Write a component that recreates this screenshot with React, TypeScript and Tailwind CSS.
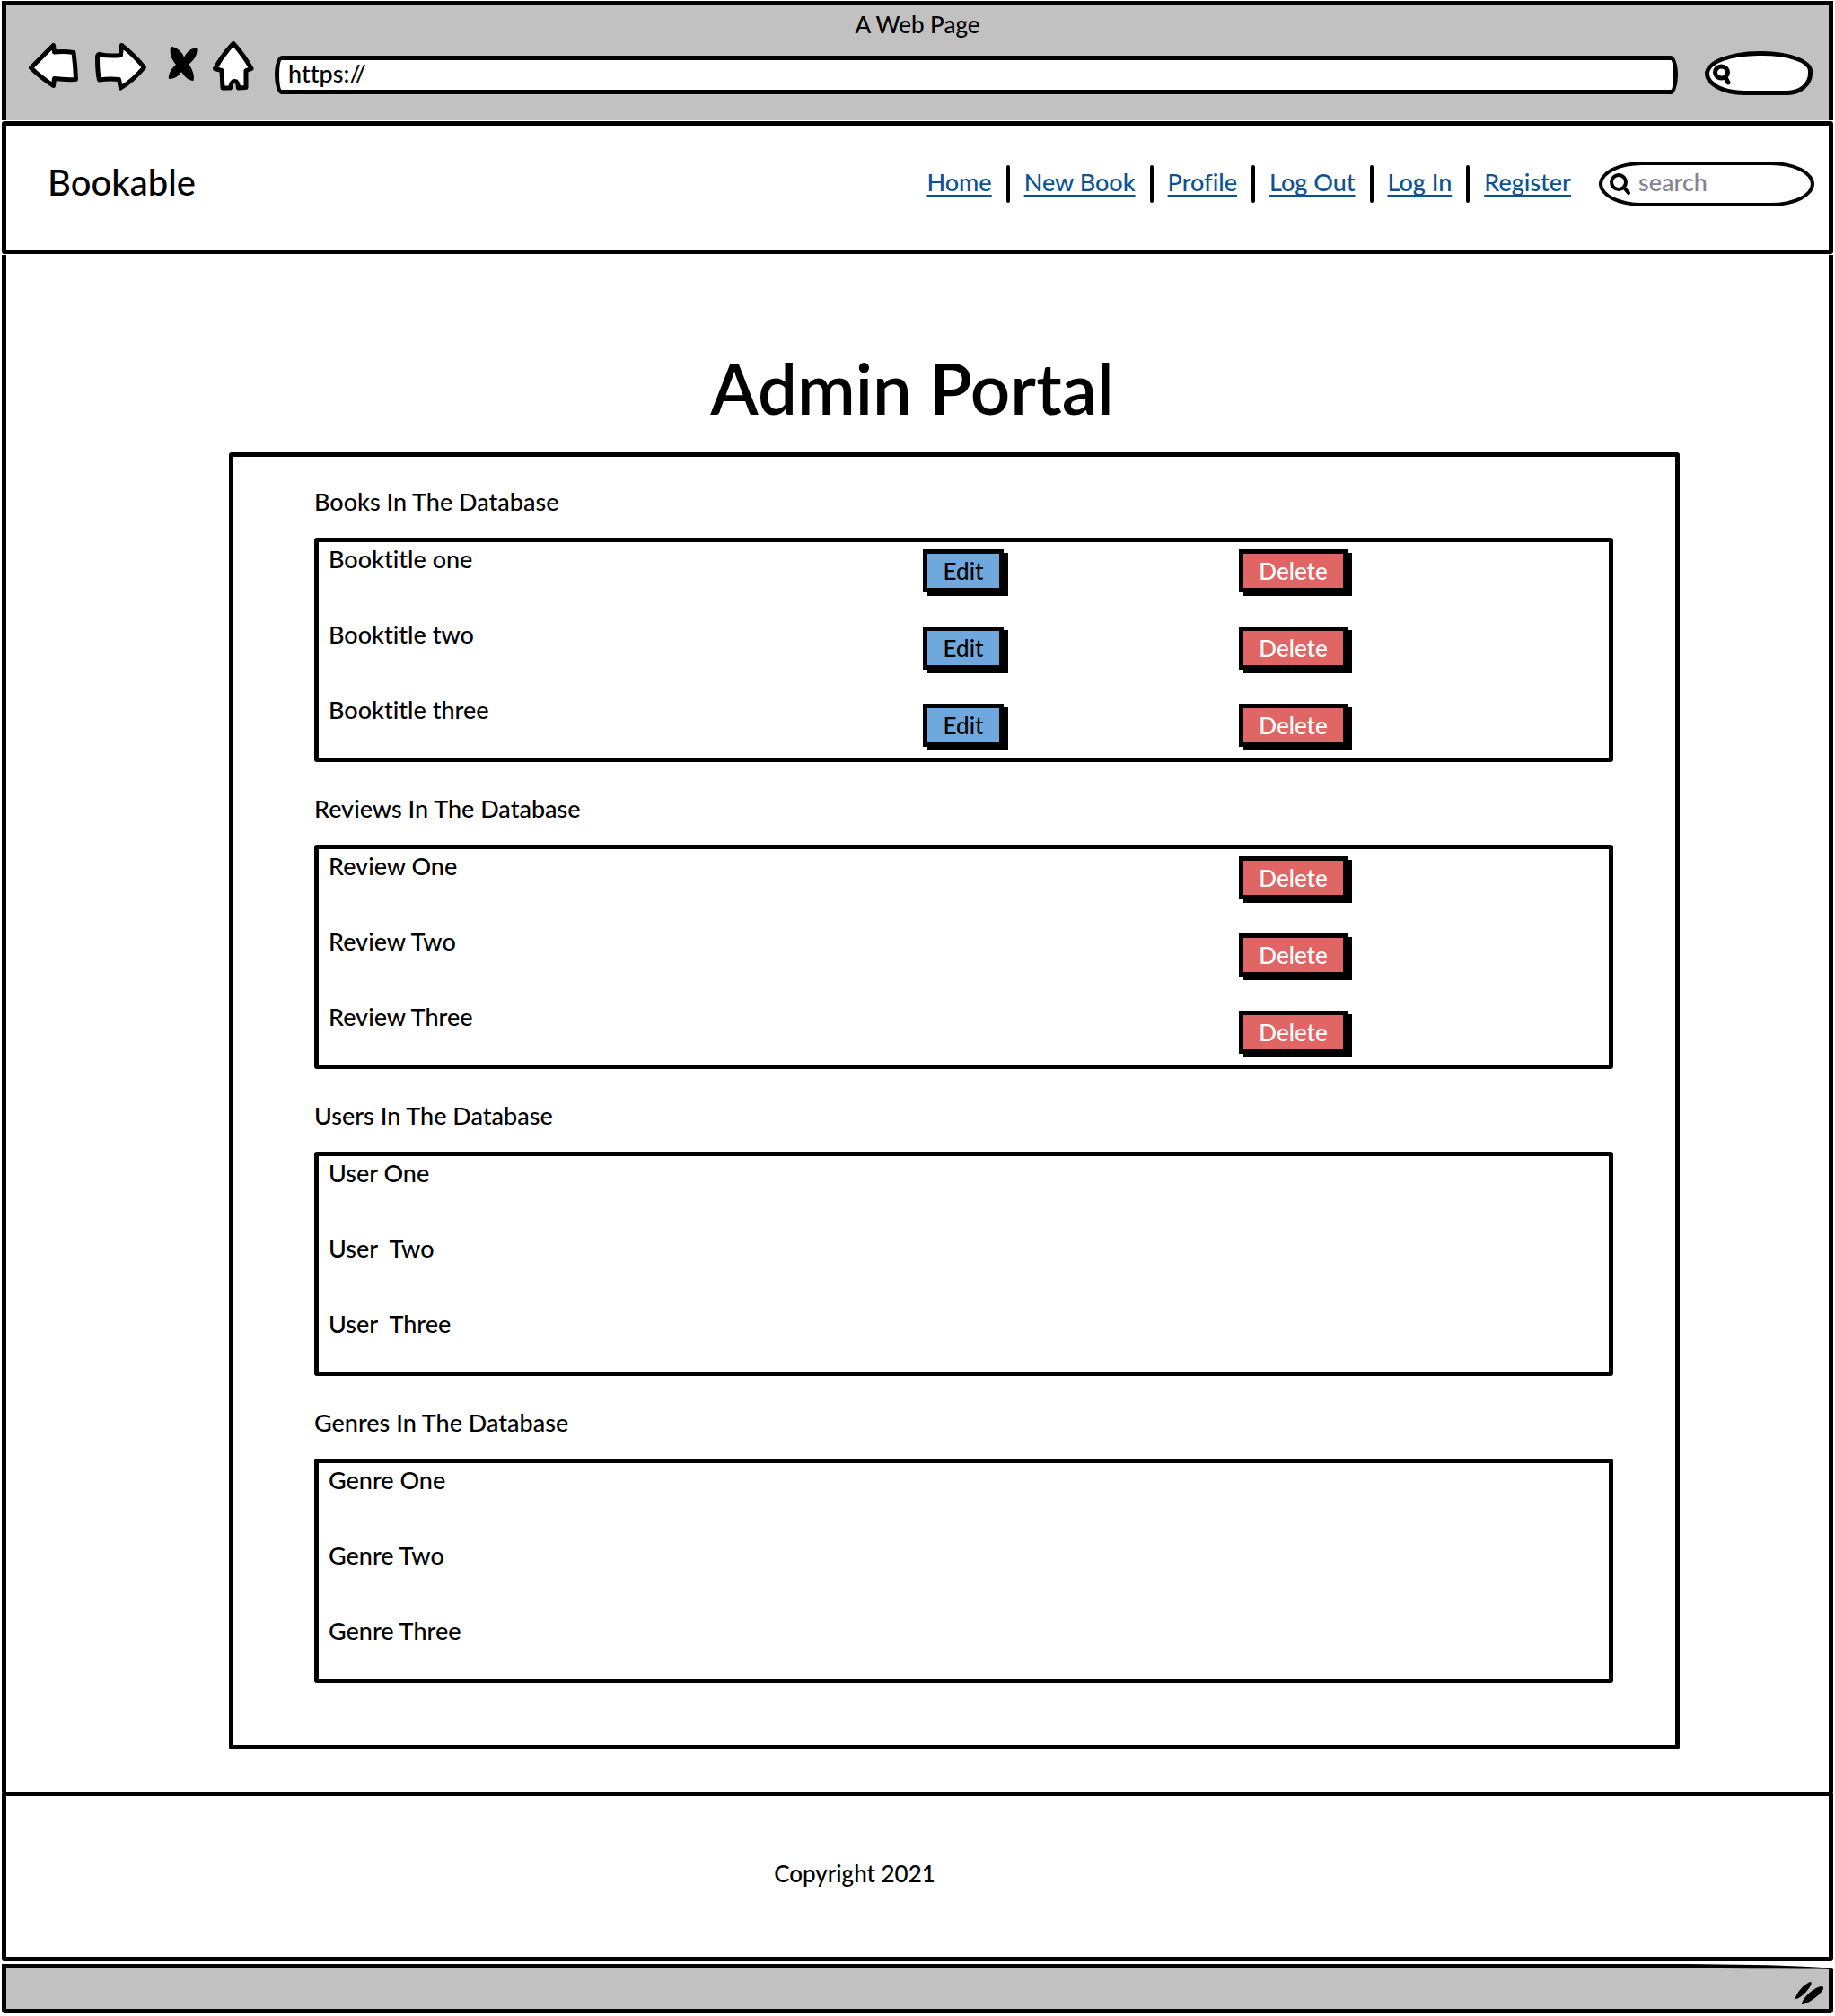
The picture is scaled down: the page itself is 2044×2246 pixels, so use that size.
import type { ReactNode } from "react";

type Section = { name: string; items: string[]; canEdit?: boolean; canDelete?: boolean };

const sections: Section[] = [
  { name: "Books", items: ["Booktitle one", "Booktitle two", "Booktitle three"], canEdit: true, canDelete: true },
  { name: "Reviews", items: ["Review One", "Review Two", "Review Three"], canDelete: true },
  { name: "Users", items: ["User One", "User  Two", "User  Three"] },
  { name: "Genres", items: ["Genre One", "Genre Two", "Genre Three"] },
];

const links = ["Home", "New Book", "Profile", "Log Out", "Log In", "Register"];

function ToolButton({ label, className, children }: { label: string; className: string; children: ReactNode }) {
  return (
    <button type="button" aria-label={label} className={className}>
      {children}
    </button>
  );
}

function BrowserBar() {
  const outline = { fill: "#fff", stroke: "#000", strokeWidth: 5, strokeLinejoin: "round" as const };
  return (
    <div className="border-x-5 border-t-5 border-black bg-[#c1c1c1] pt-[5px] pb-7">
      <p className="text-center text-[26px] leading-8">A Web Page</p>
      <div className="flex items-end pr-[18px] pl-[25px]">
        <ToolButton label="Back" className="mr-4">
          <svg width="56" height="63" viewBox="32 43 56 63" {...outline}>
            <path d="M34.5 75.5 L59.5 50.5 L60.5 58 Q72 57 82 58.5 Q84 73 84.5 88.5 Q72 89 60.5 87.5 L59.5 95.5 Q45 86 34.5 75.5Z" />
          </svg>
        </ToolButton>
        <ToolButton label="Forward" className="mr-[22px]">
          <svg width="60" height="63" viewBox="104 43 60 63" {...outline}>
            <path d="M110.5 60.5 Q122 63 134.5 61.5 L135.5 50.5 Q149 61 160.5 75 Q149 89 134.5 98 L132.5 88.5 Q121 87.500 110.5 89 Q108.500 81 108.500 64 Q108.500 61 110.500 60.500Z" />
          </svg>
        </ToolButton>
        <ToolButton label="Stop" className="mr-3.5">
          <svg width="36" height="63" viewBox="186 43 36 63">
            <path d="M190.500 52 C197 52 204 59 205 64 C208 58 213 53 219.500 54 C220.500 62 214 69 210.500 71.500 C214 77 217 84 215.500 90 C209 90 204 83 202 80 C199 85 194 88 188 88 C187 82 192 75 196 72 C191 66 188 59 190.500 52Z" />
          </svg>
        </ToolButton>
        <ToolButton label="Home page" className="mr-[22px]">
          <svg width="48" height="63" viewBox="236 43 48 63" {...outline}>
            <path d="M260 48.500 Q272 62 280 76.500 L274 78.500 L274 97.500 L265.500 98 Q265 90.500 261.500 90.500 Q258 90 256.500 98 L248 98 L247 78.500 L239.500 76.500 Q248 61 260 48.500Z" />
          </svg>
        </ToolButton>
        <input
          aria-label="Address"
          defaultValue="https://"
          className="mr-[30px] mb-px h-[43px] min-w-0 flex-1 rounded-[8px/22px] border-5 border-black bg-white px-2.5 pb-1 text-[27px] outline-none"
        />
        <label className="flex h-[49px] w-30 items-center rounded-[60px_56px_28px_44px/25px_22px_24px_24px] border-5 border-black bg-white pt-1 pl-1">
          <svg className="shrink-0" width="22" height="26" viewBox="0 0 22 26" fill="none" stroke="#000" strokeWidth="5" strokeLinecap="round">
            <ellipse cx="9.500" cy="9.500" rx="7" ry="6.500" />
            <path d="M14 15 L17 21" />
          </svg>
          <input aria-label="Browser search" className="w-full min-w-0 outline-none" />
        </label>
      </div>
    </div>
  );
}

function NavBar() {
  return (
    <header className="mt-px flex items-center rounded-[3px] border-5 border-black bg-white pt-10 pr-4 pb-12 pl-[46px]">
      <span className="mr-auto pb-1 text-[40px] leading-[46px]">Bookable</span>
      <nav aria-label="Main" className="mr-[31px]">
        <ul className="flex items-center">
          {links.map((link, i) => (
            <li key={link} className="flex items-center">
              {i > 0 && <span className="mx-4 h-[42px] w-1 rounded-full bg-black" />}
              <a
                href="#"
                className="pb-1 text-[27px] leading-8 text-[#0b5394] underline decoration-2 underline-offset-4 [text-decoration-skip-ink:none]"
              >
                {link}
              </a>
            </li>
          ))}
        </ul>
      </nav>
      <label className="flex h-[50px] w-60 items-center rounded-[48px/25px] border-4 border-black pl-2">
        <svg className="mr-2 shrink-0" width="24" height="26" viewBox="0 0 24 26" fill="none" stroke="#000" strokeWidth="4" strokeLinecap="round">
          <circle cx="10" cy="11" r="8" />
          <path d="M16 17 L21 23" />
        </svg>
        <input
          type="search"
          aria-label="Search"
          placeholder="search"
          className="min-w-0 flex-1 pb-1 text-[27px] leading-8 outline-none placeholder:text-[#83838d] placeholder:opacity-100"
        />
      </label>
    </header>
  );
}

function ActionColumn({ action, items }: { action: "Edit" | "Delete"; items: string[] }) {
  const tone =
    action === "Edit" ? "w-[90px] bg-[#6fa8dc] text-black" : "w-[121px] bg-[#e06666] text-white";
  return (
    <ul className="flex flex-col gap-[38px] pt-2">
      {items.map((item) => (
        <li key={item} className="flex">
          <button
            type="button"
            aria-label={`${action} ${item}`}
            className={`${tone} h-12 border-5 border-black text-[26px] leading-8 shadow-[5px_4px_0_#000]`}
          >
            {action}
          </button>
        </li>
      ))}
    </ul>
  );
}

function DatabaseSection({ name, items, canEdit, canDelete }: Section) {
  return (
    <section>
      <h2 className="mb-6 text-[27px] leading-8">{name} In The Database</h2>
      <div className="grid min-h-[250px] grid-cols-[673fr_352fr_412fr] rounded-[3px] border-5 border-black">
        <ul className="flex flex-col gap-[52px] pt-[3px] pl-[11px] text-[27px] leading-8 whitespace-pre">
          {items.map((item) => (
            <li key={item}>{item}</li>
          ))}
        </ul>
        {canEdit ? <ActionColumn action="Edit" items={items} /> : <div />}
        {canDelete ? <ActionColumn action="Delete" items={items} /> : <div />}
      </div>
    </section>
  );
}

export default function App() {
  return (
    <div className="min-h-screen bg-white px-0.5 pt-px pb-[3px] font-['Lato',sans-serif] font-medium text-black [font-variant-ligatures:none]">
      <BrowserBar />
      <NavBar />
      <main className="mt-px border-x-5 border-black pt-[100px] pb-[47px]">
        <h1 className="mr-3 text-center text-[78px] leading-[96px] font-semibold">Admin Portal</h1>
        <div className="mt-6 mr-[166px] ml-[248px] flex flex-col gap-9 rounded-[3px] border-5 border-black pt-[34px] pr-[69px] pb-[69px] pl-[90px]">
          {sections.map((section) => (
            <DatabaseSection key={section.name} {...section} />
          ))}
        </div>
      </main>
      <footer className="rounded-[3px] border-5 border-black pt-[70px] pr-[140px] pb-[77px] text-center text-[26px] leading-8">
        <p>Copyright 2021</p>
      </footer>
      <div className="mt-[3px] flex h-[55px] items-end justify-end rounded-[0_200px_4px_4px/0_6px_4px_4px] border-5 border-black bg-[#c1c1c1] pr-1 pb-1">
        <svg width="34" height="27" viewBox="2000 2207 34 27">
          <path d="M2001 2227 C2001 2221 2010 2211 2017 2208 C2020 2208 2019 2211 2016 2215 C2012 2221 2005 2227 2001 2227Z" />
          <path d="M2008 2233 C2008 2227 2020 2215 2029 2213 C2033 2213 2033 2215 2030 2219 C2025 2225 2014 2233 2008 2233Z" />
        </svg>
      </div>
    </div>
  );
}
